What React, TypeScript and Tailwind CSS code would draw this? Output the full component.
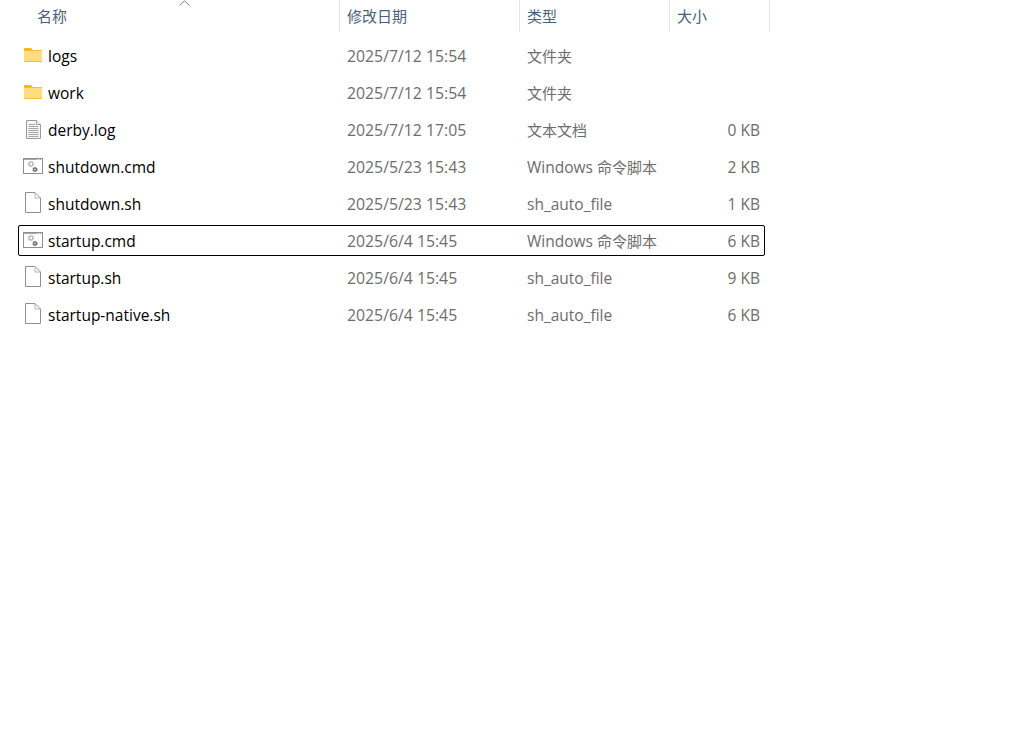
import React from "react";

type Kind = "folder" | "log" | "cmd" | "file";

type Row = {
  name: string;
  date: string;
  type: string;
  typeCn?: string;
  size: string;
  kind: Kind;
  selected?: boolean;
};

const rows: Row[] = [
  { name: "logs", date: "2025/7/12 15:54", type: "", typeCn: "文件夹", size: "", kind: "folder" },
  { name: "work", date: "2025/7/12 15:54", type: "", typeCn: "文件夹", size: "", kind: "folder" },
  { name: "derby.log", date: "2025/7/12 17:05", type: "", typeCn: "文本文档", size: "0 KB", kind: "log" },
  { name: "shutdown.cmd", date: "2025/5/23 15:43", type: "Windows ", typeCn: "命令脚本", size: "2 KB", kind: "cmd" },
  { name: "shutdown.sh", date: "2025/5/23 15:43", type: "sh_auto_file", size: "1 KB", kind: "file" },
  { name: "startup.cmd", date: "2025/6/4 15:45", type: "Windows ", typeCn: "命令脚本", size: "6 KB", kind: "cmd", selected: true },
  { name: "startup.sh", date: "2025/6/4 15:45", type: "sh_auto_file", size: "9 KB", kind: "file" },
  { name: "startup-native.sh", date: "2025/6/4 15:45", type: "sh_auto_file", size: "6 KB", kind: "file" },
];

const FileIcon = ({ kind }: { kind: Kind }) => {
  if (kind === "folder") {
    return (
      <svg width="20" height="23" viewBox="0 0 20 23" className="shrink-0">
        <path d="M1 5C1 4.400 1.400 4 2 4H8L10 6.500H1Z" fill="#f9b417" />
        <path d="M1 6H18.500C18.800 6 19 6.200 19 6.500V17.500C19 17.800 18.800 18 18.500 18H1.500C1.200 18 1 17.800 1 17.500Z" fill="#f5bd3a" />
        <rect x="1" y="7" width="18" height="10" fill="#ffdc7d" />
      </svg>
    );
  }
  if (kind === "log") {
    return (
      <svg width="20" height="23" viewBox="0 0 20 23" fill="none" className="shrink-0">
        <path d="M3.500 2.500H13.500L17.500 6.500V20.500H3.500Z" fill="#f6f6f6" stroke="#9a9a9a" />
        <path d="M13.500 2.500V6.500H17.500" fill="#fff" stroke="#9a9a9a" />
        <path d="M5.500 6.500H12M5.500 8.500H15.500M5.500 10.500H15.500M5.500 12.500H15.500M5.500 14.500H15.500M5.500 16.500H15.500M5.500 18.500H15.500" stroke="#a8a8a8" />
      </svg>
    );
  }
  if (kind === "cmd") {
    return (
      <svg width="20" height="23" viewBox="0 0 20 23" fill="none" className="shrink-0">
        <rect x=".500" y="3.500" width="19" height="15" fill="#fff" stroke="#8f8f8f" />
        <path d="M1 4H19V5H1Z" fill="#a8a8a8" />
        <path d="M14 4.500H15M16 4.500H17M18 4.500H19" stroke="#efefef" />
        <circle cx="8" cy="9" r="2" stroke="#bdbdbd" strokeWidth="1.600" />
        <circle cx="8" cy="9" r="3" stroke="#cfcfcf" strokeDasharray="1.500 1.500" />
        <circle cx="12" cy="14.500" r="1.500" stroke="#6a6a6a" strokeWidth="1.400" />
        <circle cx="12" cy="14.500" r="2.300" stroke="#8a8a8a" strokeDasharray="1.200 1.200" />
      </svg>
    );
  }
  return (
    <svg width="20" height="23" viewBox="0 0 20 23" fill="none" className="shrink-0">
      <path d="M2.500 .5H12L17.500 6V20.500H2.500Z" fill="#fff" stroke="#8f8f8f" />
      <path d="M12 .5V6H17.500" stroke="#b5b5b5" />
    </svg>
  );
};

const HeaderCell = ({ label, width }: { label: string; width: string }) => (
  <div className={`${width} h-8 shrink-0 border-r border-[#e5e5e5] pl-[7px] pt-[5px] text-[#4c607a]`}>{label}</div>
);

export default function App() {
  return (
    <div
      className="relative min-h-[730px] w-[1018px] bg-white text-[15px] leading-[22px]"
      style={{ fontFamily: '"Open Sans", "Noto Sans CJK SC", sans-serif' }}
    >
      <div className="flex h-8 w-[770px]">
        <div className="relative h-8 w-[340px] shrink-0 border-r border-[#e5e5e5] pl-[37px] pt-[5px] text-[#4c607a]">
          名称
          <svg className="absolute left-[179px] top-0" width="11" height="6" viewBox="0 0 11 6" fill="none">
            <path d="M.5 5.500L5.500 .8L10.500 5.500" stroke="#7f7f7f" />
          </svg>
        </div>
        <HeaderCell label="修改日期" width="w-[180px]" />
        <HeaderCell label="类型" width="w-[150px]" />
        <HeaderCell label="大小" width="w-[100px]" />
      </div>
      <div className="ml-[18px] mt-[8px] flex w-[747px] flex-col gap-[6px]">
        {rows.map((row) => (
          <div
            key={row.name}
            className={`flex h-[31px] items-center rounded-[2px] border ${row.selected ? "border-black" : "border-transparent"}`}
          >
            <div className="flex w-[320px] shrink-0 items-center gap-[5px] pl-[4px] text-[15.5px] text-black">
              <FileIcon kind={row.kind} />
              <span>{row.name}</span>
            </div>
            <div className="w-[180px] shrink-0 pl-[8px] text-[15.8px] text-[#6d6d6d]">{row.date}</div>
            <div className="w-[150px] shrink-0 whitespace-pre pl-[8px] text-[15.5px] text-[#6d6d6d]">
              {row.type}
              <span className="text-[15px]">{row.typeCn}</span>
            </div>
            <div className="w-[91px] shrink-0 text-right text-[15.5px] text-[#6d6d6d]">{row.size}</div>
          </div>
        ))}
      </div>
    </div>
  );
}
